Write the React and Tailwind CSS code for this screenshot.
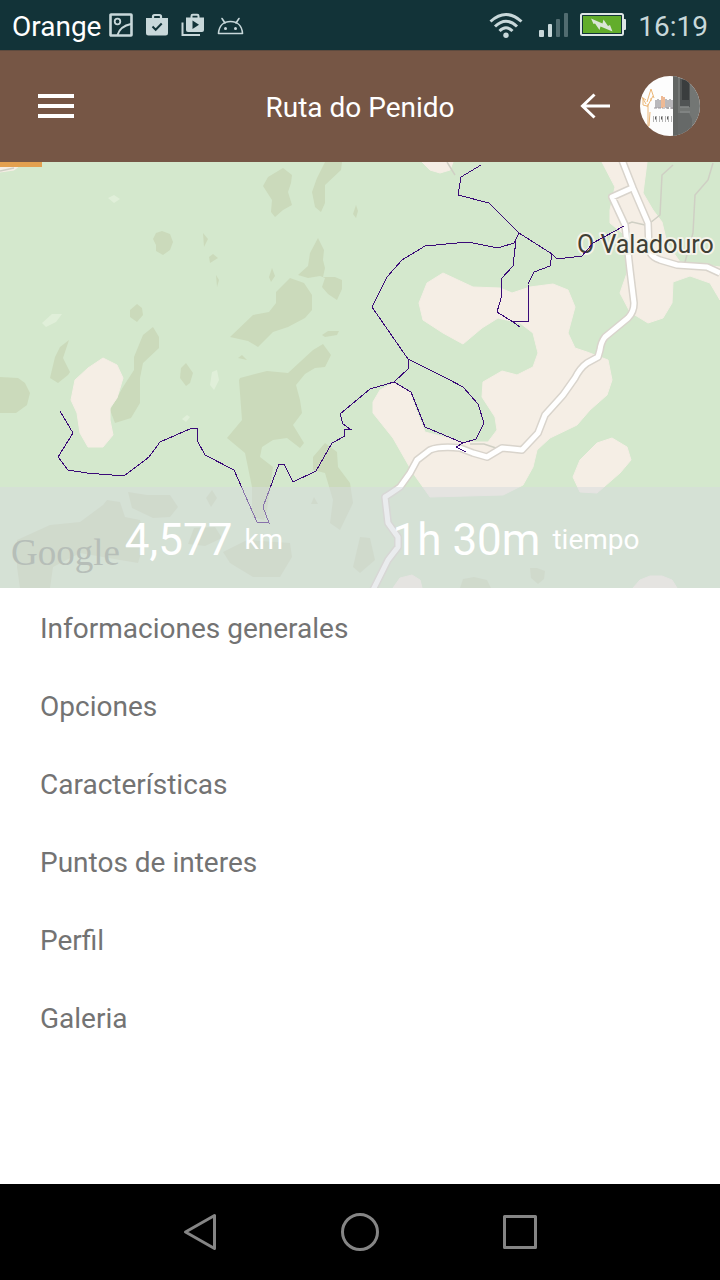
const sections = [
  'Informaciones generales',
  'Opciones',
  'Características',
  'Puntos de interes',
  'Perfil',
  'Galeria',
]

const woods = [
  '283,168 292,175 291,183 288,192 292,205 283,210 275,217 271,212 272,200 263,186 268,177',
  '325,162 342,162 341,170 325,185 325,203 321,212 315,207 312,192 317,178',
  '356,205 358,211 356,218 353,214',
  '162,231 170,234 173,242 170,250 163,255 156,251 156,245 153,239 156,233',
  '203,233 208,239 204,247',
  '209,257 213,254 218,258 210,263',
  '216,275 219,280 217,287',
  '272,268 275,276 271,282 269,277',
  '318,238 324,250 323,260 325,268 323,277 335,277 342,280 342,289 337,300 328,294 322,287 325,278 320,276 308,278 298,275 308,266 310,253',
  '290,278 304,283 312,295 312,310 305,318 288,327 273,332 258,347 248,341 230,337 253,315 269,312 276,303 276,292',
  '322,335 328,331 339,331 337,335 325,337',
  '137,304 142,308 143,315 137,322 130,317 130,310',
  '238,358 242,355 247,360',
  '69,340 63,358 70,372 68,375 58,383 50,378 55,357 60,347',
  '0,377 18,378 25,383 30,393 27,405 16,413 0,413',
  '153,327 159,337 159,348 143,363 140,378 140,403 131,418 115,423 110,410 123,387 134,370 134,357 143,335',
  '186,363 193,373 190,383 186,386 180,378 181,368',
  '323,344 331,355 325,367 315,368 305,374 296,385 300,400 302,413 293,425 304,443 300,448 287,438 273,440 262,447 260,457 273,467 267,510 264,520 252,517 252,487 245,453 227,438 242,420 239,380 240,378 267,371 288,373 313,350',
  '325,443 337,452 338,467 350,483 353,503 340,530 330,523 333,500 325,473 313,470 313,457',
  '17,540 50,525 80,522 103,505 107,500 120,502 125,517 140,520 145,540 138,563 120,560 80,553 53,567 50,588 20,588 17,567',
  '128,492 147,495 170,495 178,507 170,517 153,518 132,508',
  '212,490 217,498 211,507 206,498',
  '194,528 215,527 222,538 205,546 188,544',
  '247,540 290,543 292,557 280,577 253,577 230,563 223,552',
  '353,567 360,537 370,538 375,560 360,573',
  '314,497 318,504 311,504',
  '530,568 537,568 545,571 544,579 538,584 531,578',
  '460,588 463,579 474,577 487,580 491,588',
]

const clearings = [
  '103,358 117,365 123,378 117,398 110,408 110,420 113,435 103,447 88,447 80,433 77,413 71,400 75,380 88,368',
  '422,162 430,170 440,173 450,170 453,162',
  '443,273 473,287 500,288 512,293 530,287 553,284 568,290 575,307 568,333 575,348 587,352 608,360 612,380 607,395 590,410 577,425 550,438 537,450 533,467 523,485 503,495 430,497 413,473 393,438 373,413 373,402 380,390 393,383 410,392 415,407 425,432 463,442 488,442 497,430 495,417 482,397 483,382 502,371 517,375 533,367 538,353 533,333 520,323 498,318 482,328 463,344 443,333 423,320 419,303 427,283',
  '602,162 647,162 643,193 653,210 662,222 667,243 680,262 720,267 720,300 710,283 690,276 673,282 672,303 663,318 648,323 630,312 620,293 627,273 627,237 610,223 610,210 615,187',
  '612,438 627,447 631,460 620,473 597,493 580,492 573,477 580,460 597,443',
  '393,588 400,578 412,575 420,580 422,588',
  '633,588 640,580 650,576 662,576 672,580 677,588',
  '0,162 24,162 14,170 0,172',
]

const meadows = [
  '108,198 114,195 120,199 114,203',
  '42,323 52,314 62,314 56,322 46,327',
  '212,372 217,370 219,380 214,390 210,385',
  '182,419 187,415 190,417 186,422',
]

const paths = [
  'M673 165 662 175 660 215 650 223',
  'M713 163 708 180 695 195 693 233 685 262',
  'M447 162 455 175',
  'M625 225 632 222 645 225',
  'M470 444 484 444 496 448',
  'M0 171 14 168',
]

const roads = [
  'M622 160 633 188 648 223 649 250Q651 257 660 260L677 265 707 267 720 273',
  'M632 188 612 197 625 225 630 270 634 303Q634 312 628 318L605 337Q601 342 600 350L598 357 587 363Q580 368 575 378L563 395 545 415 538 433 522 450 502 448 487 457 473 453 460 448Q440 446 430 450L417 460 410 473 400 487Q390 494 385 497L388 523 398 537 398 547 388 560 373 590',
]

const route = [
  'M481 165 461 177 458 195 489 203 519 233 552 254 557 259 582 256 593 243 624 226',
  'M519 233 514 243 498 248 468 242 425 246 402 260 387 277 372 307 408 359 448 379 463 387 478 404 484 423 476 439 463 443 456 447 466 452',
  'M463 443 425 427 411 392 394 382 370 389 340 414 343 424 350 429 344 429 345 436 332 443 316 471 293 482 284 464 279 464 263 507 269 523 257 522 234 470 205 455 198 442 197 428 192 428 160 442 149 457 124 476 87 473 68 470 58 457 73 433 60 411',
  'M408 359 408 369 394 382',
  'M516 240 513 266 501 279 502 295 497 312 513 322 520 327',
  'M513 321 529 321 528 284 534 272 550 266 552 254',
]

function PictureIcon() {
  return (
    <svg className="w-6 h-6" viewBox="0 0 24 24" fill="none" stroke="currentColor">
      <rect x="1.5" y="1.5" width="21" height="21" rx="0.5" strokeWidth="2.6" />
      <circle cx="8.5" cy="8.5" r="2.8" strokeWidth="1.8" />
      <path d="M8.5 22C10 17 14.500 12.500 22 11" strokeWidth="2" />
    </svg>
  )
}

function BagCheckIcon() {
  return (
    <svg className="w-6 h-6" viewBox="0 0 24 24">
      <path d="M8 5.5V3.500Q8 2 9.500 2h5Q16 2 16 3.500v2" fill="none" stroke="currentColor" strokeWidth="2.200" />
      <path d="M1 5h22V20a2.500 2.500 0 0 1-2.500 2.500h-17A2.500 2.500 0 0 1 1 20z" fill="currentColor" />
      <path d="M7.500 13.500l3.200 3.200 6-6.200" fill="none" stroke="#123338" strokeWidth="2" />
    </svg>
  )
}

function BagPlayIcon() {
  return (
    <svg className="w-6 h-6" viewBox="0 0 24 24">
      <path d="M1.500 9.500V22H19" fill="none" stroke="currentColor" strokeWidth="2" />
      <path d="M10.500 5V3Q10.500 1.800 11.700 1.800h4.600Q17.500 1.800 17.500 3v2" fill="none" stroke="currentColor" strokeWidth="2" />
      <path d="M5 4.500h18v12.500a2 2 0 0 1-2 2H7a2 2 0 0 1-2-2z" fill="currentColor" />
      <path d="M11.500 7.500v8.500l6.500-4.250z" fill="#123338" />
    </svg>
  )
}

function AndroidIcon() {
  return (
    <svg className="w-7 h-6" viewBox="0 0 28 24" fill="none" stroke="currentColor" strokeWidth="1.6">
      <path d="M1.500 20.500C2 12.500 7 8.500 13.500 8.500S25 12.500 25.500 20.500z" strokeLinejoin="round" />
      <path d="M8 10L5 5.500M19 10l3-4.500" strokeLinecap="round" />
      <circle cx="8.500" cy="15.500" r="1.500" fill="currentColor" stroke="none" />
      <circle cx="18.500" cy="15.500" r="1.500" fill="currentColor" stroke="none" />
    </svg>
  )
}

function WifiIcon() {
  return (
    <svg className="w-9 h-7" viewBox="0 0 36 28" fill="none" stroke="currentColor" strokeWidth="3">
      <path d="M2.500 10.500Q18-3.500 33.500 10.500" />
      <path d="M7 15.500Q18 5 29 15.500" />
      <path d="M11.500 20Q18 13.500 24.500 20" />
      <circle cx="18" cy="24.300" r="2.700" fill="currentColor" stroke="none" />
    </svg>
  )
}

function SignalIcon() {
  return (
    <svg className="w-[30px] h-7" viewBox="0 0 30 28" fill="currentColor">
      <rect x="1" y="19" width="5" height="7" rx="1" />
      <rect x="10" y="13" width="4" height="13" rx="1" />
      <rect x="18" y="8" width="4" height="18" rx="1" opacity="0.35" />
      <rect x="26" y="2" width="4" height="24" rx="1" opacity="0.35" />
    </svg>
  )
}

function BatteryIcon() {
  return (
    <svg className="w-[46px] h-6" viewBox="0 0 46 24">
      <rect x="1" y="1" width="42" height="21" rx="1.500" fill="none" stroke="#dfe6e6" strokeWidth="2" />
      <rect x="43" y="6" width="3" height="11" rx="1" fill="#dfe6e6" />
      <rect x="3" y="3" width="38" height="17" fill="#62ad2b" />
      <path d="M11 5.500L22.500 10.500 23.500 6.500 28 13l2-1 2.500 6.500L20.500 13.500 19.500 17 15 10.500l-1.500.5z" fill="#dbe6d6" />
    </svg>
  )
}

function StatusBar() {
  return (
    <div className="h-[50px] bg-[#123338] flex items-center px-3 text-[#c8d8da]">
      <span className="text-[28px] leading-8 pt-1 text-white">Orange</span>
      <div className="flex items-center gap-3 ml-2">
        <PictureIcon />
        <BagCheckIcon />
        <BagPlayIcon />
        <AndroidIcon />
      </div>
      <div className="flex items-center gap-3 ml-auto">
        <div className="flex items-center gap-[14px]">
          <WifiIcon />
          <SignalIcon />
        </div>
        <BatteryIcon />
        <span className="text-[28px] leading-8 pt-1">16:19</span>
      </div>
    </div>
  )
}

function Avatar() {
  return (
    <svg className="w-[60px] h-[60px] rounded-full" viewBox="0 0 60 60">
      <rect width="60" height="60" fill="#fdfdfd" />
      <rect x="33" width="27" height="60" fill="#737674" />
      <path d="M33 0h5v60h-5z" fill="#626563" />
      <path d="M40 3h10v28H40z" fill="#515454" />
      <path d="M42 4h7v20h-7z" fill="#3a3d3e" />
      <path d="M38 37h11l3 6v17H38z" fill="#666968" />
      <path d="M40 31h9M40 36h10" stroke="#858886" strokeWidth="1.500" />
      <g fill="none" stroke="#ebb677" strokeWidth="1">
        <path d="M6 24l-3-2v7l4 1M7 26l4-13 3 9M11 22v3M8 28V52M2 21l4 7M13 20l-6 11M9 50l1-14" />
      </g>
      <path d="M16 24v8M18 23v9M20 24v8M26 23v9M28 24v9M30 23v8M32 24v9" stroke="#77747a" strokeWidth="1" />
      <path d="M14 32h19" stroke="#9b979c" strokeWidth="1" strokeDasharray="3 1" />
      <path d="M22 20v12M24 21v10" stroke="#e58d50" strokeWidth="1.200" />
      <path d="M13 43h20" stroke="#b5b5b5" strokeWidth="6" strokeDasharray="1 2" />
      <path d="M15 42h18" stroke="#5b5b5b" strokeWidth="3" strokeDasharray="1 5" />
    </svg>
  )
}

function Header() {
  return (
    <header className="h-28 bg-[#765645] shadow-[inset_0_1px_0_#5e4a3e] flex items-center justify-between px-5 text-white">
      <div className="flex-1">
        <button type="button" aria-label="Menu" className="flex flex-col gap-1.5 p-[18px]">
          <span className="w-9 h-1 bg-white" />
          <span className="w-9 h-1 bg-white" />
          <span className="w-9 h-1 bg-white" />
        </button>
      </div>
      <h1 className="text-[28px] leading-9 pt-1">Ruta do Penido</h1>
      <div className="flex-1 flex items-center justify-end gap-[30px]">
        <button type="button" aria-label="Back">
          <svg className="w-[30px] h-[30px]" viewBox="0 0 30 30" fill="none" stroke="currentColor" strokeWidth="3">
            <path d="M30 15H3M14.500 3.500L2.500 15l12 11.500" />
          </svg>
        </button>
        <button type="button" aria-label="Profile">
          <Avatar />
        </button>
      </div>
    </header>
  )
}

function RouteMap() {
  return (
    <svg className="block w-full h-full" viewBox="0 162 720 426" preserveAspectRatio="xMidYMid slice">
      <rect y="162" width="720" height="426" fill="#d4e8cd" />
      <g fill="#cbdabb">
        {woods.map((points) => <polygon key={points} points={points} />)}
      </g>
      <g fill="#e0efd9">
        {meadows.map((points) => <polygon key={points} points={points} />)}
      </g>
      <g fill="#f5eee5" stroke="#f5eee5" strokeWidth="1" strokeLinejoin="round">
        {clearings.map((points) => <polygon key={points} points={points} />)}
      </g>
      <g fill="none" stroke="#cfcfc4" strokeWidth="1.500">
        {paths.map((d) => <path key={d} d={d} />)}
      </g>
      <g fill="none" stroke="#d9d4cc" strokeWidth="8" strokeLinejoin="round">
        {roads.map((d) => <path key={d} d={d} />)}
      </g>
      <g fill="none" stroke="#ffffff" strokeWidth="5" strokeLinejoin="round">
        {roads.map((d) => <path key={d} d={d} />)}
      </g>
      <text
        x="577"
        y="253"
        fontSize="25"
        fill="#403f35"
        stroke="#f5f3ea"
        strokeWidth="4"
        strokeLinejoin="round"
        paintOrder="stroke"
      >
        O Valadouro
      </text>
      <g fill="none" stroke="#3a0a78" strokeWidth="1" shapeRendering="crispEdges">
        {route.map((d) => <path key={d} d={d} />)}
      </g>
      <text
        x="11"
        y="565"
        fontSize="37"
        fontFamily="'Liberation Serif', serif"
        fill="#97a393"
      >
        Google
      </text>
    </svg>
  )
}

function Stat({ value, unit }) {
  return (
    <div className="flex items-center gap-3">
      <span className="text-[44px] leading-[56px]">{value}</span>
      <span className="text-[28px] leading-9">{unit}</span>
    </div>
  )
}

function NavBar() {
  return (
    <nav className="h-24 bg-black flex items-center justify-center gap-[120px]">
      <button type="button" aria-label="Back">
        <svg className="w-10 h-10" viewBox="0 0 40 40" fill="none" stroke="#858585" strokeWidth="3" strokeLinejoin="round">
          <path d="M34.500 3.500v33L5.500 20z" />
        </svg>
      </button>
      <button type="button" aria-label="Home">
        <svg className="w-10 h-10" viewBox="0 0 40 40" fill="none" stroke="#858585" strokeWidth="3">
          <circle cx="20" cy="20" r="17.500" />
        </svg>
      </button>
      <button type="button" aria-label="Recent apps">
        <svg className="w-10 h-10" viewBox="0 0 40 40" fill="none" stroke="#858585" strokeWidth="3" strokeLinejoin="round">
          <rect x="4.500" y="4.500" width="31" height="31" />
        </svg>
      </button>
    </nav>
  )
}

export default function App() {
  return (
    <div className="min-h-screen flex flex-col bg-white font-[Roboto,sans-serif]">
      <StatusBar />
      <Header />

      <section className="relative h-[426px]">
        <RouteMap />
        <div className="absolute top-0 left-0 w-[42px] h-[5px] bg-[#e3a04f]" />
        <div className="absolute inset-x-0 bottom-0 h-[101px] bg-[#d6dadd]/50 flex items-center px-12 pt-1 text-white">
          <div className="flex-1 flex justify-center">
            <Stat value="4,577" unit="km" />
          </div>
          <div className="flex-1 flex justify-center">
            <Stat value="1h 30m" unit="tiempo" />
          </div>
        </div>
      </section>

      <main className="flex-1">
        <ul>
          {sections.map((name) => (
            <li key={name}>
              <button type="button" className="w-full h-[78px] px-10 pt-1 text-left text-[28px] leading-9 text-[#737373]">
                {name}
              </button>
            </li>
          ))}
        </ul>
      </main>

      <NavBar />
    </div>
  )
}
